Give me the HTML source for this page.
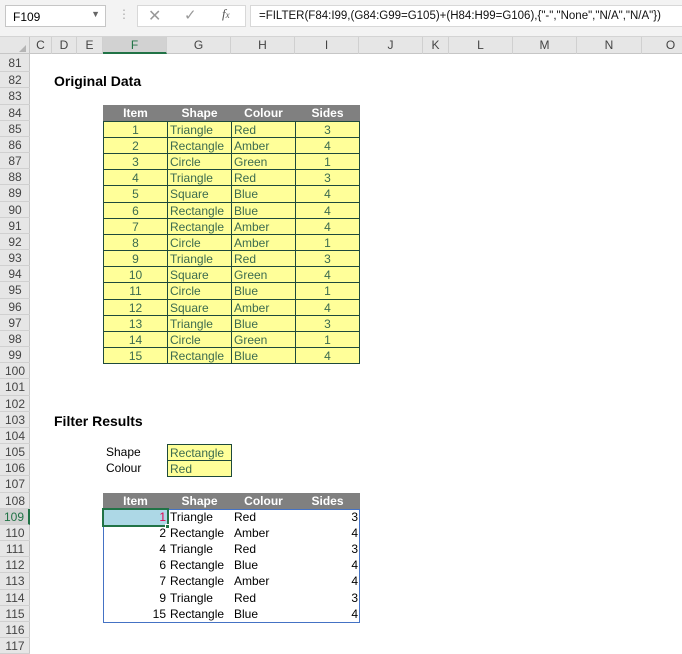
<!DOCTYPE html>
<html><head><meta charset="utf-8"><style>
*{box-sizing:border-box;margin:0;padding:0}
body{width:682px;height:637px;overflow:hidden;background:#fff;font-family:"Liberation Sans",Arial,sans-serif;font-size:12px;position:relative}
.a{position:absolute;white-space:nowrap}
</style></head><body>
<div class="a" style="left:0;top:0;width:682px;height:37px;background:#f3f3f3;border-bottom:1px solid #d4d4d4"></div>
<div class="a" style="left:5px;top:5px;width:101px;height:22px;background:#fff;border:1px solid #c6c6c6;font-size:12px;padding:4px 0 0 7px">F109<span style="position:absolute;right:5px;top:3px;font-size:9px;color:#666">▼</span></div>
<div class="a" style="left:118px;top:7px;color:#aaa;font-size:12px">⋮</div>
<div class="a" style="left:137px;top:5px;width:109px;height:22px;background:#fff;border:1px solid #d8d8d8"></div>
<div class="a" style="left:148px;top:6px;color:#999;font-size:16px">✕</div>
<div class="a" style="left:184px;top:6px;color:#999;font-size:15px">✓</div>
<div class="a" style="left:222px;top:6px;color:#555;font-size:13px;font-style:italic;font-family:'Liberation Serif',serif">f<span style="font-size:9px">x</span></div>
<div class="a" style="left:250px;top:5px;width:440px;height:22px;background:#fff;border:1px solid #d8d8d8;padding:4px 0 0 8px;font-size:11.5px;color:#111">=FILTER(F84:I99,(G84:G99=G105)+(H84:H99=G106),{"-","None","N/A","N/A"})</div>
<div id="g"></div>
<script>
(function(){
var h='';
var cols=[['C',30,52],['D',52,77],['E',77,103],['F',103,167],['G',167,231],['H',231,295],['I',295,359],['J',359,423],['K',423,449],['L',449,513],['M',513,577],['N',577,642],['O',642,700]];
h+='<div class="a" style="left:0;top:37px;width:682px;height:17px;background:#e6e6e6;border-bottom:1px solid #c6c6c6"></div>';
h+='<div class="a" style="left:0;top:37px;width:30px;height:17px;border-right:1px solid #c6c6c6"><span style="position:absolute;right:3px;bottom:2px;width:0;height:0;border-left:7px solid transparent;border-bottom:7px solid #b4b4b4"></span></div>';
cols.forEach(function(c){var sel=c[0]=='F';h+='<div class="a" style="left:'+c[1]+'px;top:37px;width:'+(c[2]-c[1])+'px;height:17px;text-align:center;line-height:16px;font-size:12px;color:#444;border-right:1px solid #d0d0d0;'+(sel?'background:#d2d2d2;border-bottom:2px solid #217346;color:#217346':'')+'">'+c[0]+'</div>';});
function rt(r){return r==81?54:Math.round(56+(r-81)*16.17);}
h+='<div class="a" style="left:0;top:54px;width:30px;height:600px;background:#e6e6e6;border-right:1px solid #c6c6c6"></div>';
for(var r=81;r<=117;r++){var t=rt(r),b=rt(r+1);var s=r==109;h+='<div class="a" style="left:0;top:'+t+'px;width:30px;height:'+(b-t)+'px;border-bottom:1px solid #d0d0d0;text-align:center;line-height:'+(b-t)+'px;font-size:12px;color:#444;'+(s?'background:#d2d2d2;border-right:2px solid #217346;color:#217346':'')+'">'+r+'</div>';}
h+='<div class="a" style="left:54px;top:'+(rt(82)+1)+'px;font-weight:bold;font-size:14px">Original Data</div>';
h+='<div class="a" style="left:54px;top:'+(rt(103)+1)+'px;font-weight:bold;font-size:14px">Filter Results</div>';
var X=[103,167,231,295,359];
function cell(x0,x1,t,b,txt,st){h+='<div class="a" style="left:'+x0+'px;top:'+t+'px;width:'+(x1-x0+1)+'px;height:'+(b-t+1)+'px;line-height:'+(b-t)+'px;'+st+'">'+txt+'</div>';}
var hd=['Item','Shape','Colour','Sides'];
[84,108].forEach(function(r){var t=rt(r),b=rt(r+1);h+='<div class="a" style="left:103px;top:'+t+'px;width:257px;height:'+(b-t)+'px;background:#808080"></div>';for(var i=0;i<4;i++)cell(X[i],X[i+1],t,b,hd[i],'text-align:center;color:#fff;font-weight:bold');});
var d=[[1,'Triangle','Red',3],[2,'Rectangle','Amber',4],[3,'Circle','Green',1],[4,'Triangle','Red',3],[5,'Square','Blue',4],[6,'Rectangle','Blue',4],[7,'Rectangle','Amber',4],[8,'Circle','Amber',1],[9,'Triangle','Red',3],[10,'Square','Green',4],[11,'Circle','Blue',1],[12,'Square','Amber',4],[13,'Triangle','Blue',3],[14,'Circle','Green',1],[15,'Rectangle','Blue',4]];
var bs='background:#ffff99;border:1px solid #1e4a3c;color:#3c6b4f;';
d.forEach(function(row,k){var t=rt(85+k),b=rt(86+k);cell(X[0],X[1],t,b,row[0],bs+'text-align:center');cell(X[1],X[2],t,b,row[1],bs+'padding-left:2px');cell(X[2],X[3],t,b,row[2],bs+'padding-left:2px');cell(X[3],X[4],t,b,row[3],bs+'text-align:center');});
h+='<div class="a" style="left:106px;top:'+(rt(105))+'px;line-height:16px">Shape</div>';
h+='<div class="a" style="left:106px;top:'+(rt(106))+'px;line-height:16px">Colour</div>';
cell(167,231,rt(105),rt(106),'Rectangle',bs+'padding-left:2px');
cell(167,231,rt(106),rt(107),'Red',bs+'padding-left:2px');
var f=[[1,'Triangle','Red',3],[2,'Rectangle','Amber',4],[4,'Triangle','Red',3],[6,'Rectangle','Blue',4],[7,'Rectangle','Amber',4],[9,'Triangle','Red',3],[15,'Rectangle','Blue',4]];
h+='<div class="a" style="left:103px;top:'+rt(109)+'px;width:257px;height:'+(rt(116)-rt(109)+1)+'px;border:1px solid #4472c4"></div>';
h+='<div class="a" style="left:104px;top:'+(rt(109)+1)+'px;width:63px;height:'+(rt(110)-rt(109)-1)+'px;background:#add8e6"></div>';
f.forEach(function(row,k){var t=rt(109+k),b=rt(110+k);cell(103,167,t,b,row[0],'text-align:right;padding-right:2px;'+(k==0?'color:#e0004d':''));cell(167,231,t,b,row[1],'padding-left:3px');cell(231,295,t,b,row[2],'padding-left:3px');cell(295,359,t,b,row[3],'text-align:right;padding-right:2px');});
h+='<div class="a" style="left:102px;top:'+(rt(109)-1)+'px;width:67px;height:'+(rt(110)-rt(109)+3)+'px;border:2px solid #217346"></div>';
h+='<div class="a" style="left:165px;top:'+(rt(110)-1)+'px;width:5px;height:5px;background:#217346;border:1px solid #fff"></div>';
document.getElementById('g').innerHTML=h;
})();
</script>
</body></html>
